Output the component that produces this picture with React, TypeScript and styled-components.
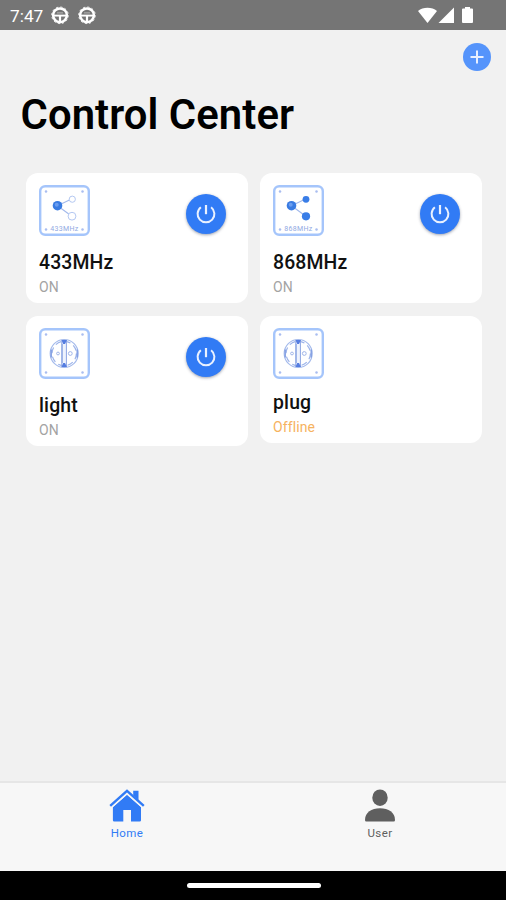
import React from "react";
import styled, { createGlobalStyle } from "styled-components";

const GlobalStyle = createGlobalStyle`
  * { box-sizing: border-box; }
  body { margin: 0; background: #f1f1f1; font-family: Roboto, "Liberation Sans", sans-serif; }
  svg { display: block; flex: none; }
  button { border: 0; padding: 0; font: inherit; }
`;

const Screen = styled.div`
  width: 506px;
  height: 900px;
  display: flex;
  flex-direction: column;
  overflow: hidden;
  background: #f1f1f1;
`;

const StatusBar = styled.header`
  height: 30px;
  flex: none;
  display: flex;
  justify-content: space-between;
  align-items: center;
  padding: 1px 33px 0 10px;
  background: #757575;
  color: #fff;
`;

const StatusGroup = styled.div<{ $gap: number }>`
  display: flex;
  align-items: center;
  gap: ${(p) => p.$gap}px;
`;

const Clock = styled.span`
  width: 33px;
  margin-right: -1px;
  font-size: 17.3px;
  line-height: 20px;
  white-space: nowrap;
`;

const BatterySlot = styled.div`
  padding-left: 6px;
`;

const Main = styled.main`
  flex: 1;
  display: flex;
  flex-direction: column;
`;

const Toolbar = styled.div`
  display: flex;
  justify-content: flex-end;
  padding: 13px 15px 0 0;
`;

const AddButton = styled.button`
  width: 28px;
  height: 28px;
  display: grid;
  place-items: center;
  border-radius: 50%;
  background: #5594fb;
`;

const Title = styled.h1`
  margin: 19px 0 0 20.5px;
  font-size: 41.8px;
  line-height: 50px;
  font-weight: 600;
  letter-spacing: 0.08px;
  color: #000;
  white-space: nowrap;
`;

const Grid = styled.section`
  display: grid;
  grid-template-columns: 222px 222px;
  align-items: start;
  gap: 13px 12px;
  padding: 33px 0 0 26px;
`;

const Card = styled.article<{ $height: number }>`
  height: ${(p) => p.$height}px;
  padding: 12px 22px 0 13px;
  border-radius: 12px;
  background: #fff;
`;

const CardTop = styled.div`
  height: 51px;
  display: flex;
  justify-content: space-between;
`;

const PowerButton = styled.button`
  width: 40px;
  height: 40px;
  margin-top: 9px;
  display: grid;
  place-items: center;
  border-radius: 50%;
  background: #317bf5;
  box-shadow: 0 1px 3px rgba(40, 50, 80, 0.45);
`;

const DeviceName = styled.h2<{ $tight: boolean }>`
  margin: ${(p) => (p.$tight ? 12 : 15)}px 0 0;
  font-size: 19.4px;
  line-height: 24px;
  font-weight: 500;
  letter-spacing: 0.15px;
  color: #111;
`;

const DeviceState = styled.p<{ $offline: boolean }>`
  margin: 3px 0 0;
  font-size: 14px;
  line-height: 18px;
  letter-spacing: 0.1px;
  color: ${(p) => (p.$offline ? "#f6b260" : "#a3a3a3")};
`;

const TabBar = styled.nav`
  height: 90px;
  flex: none;
  display: grid;
  grid-template-columns: 1fr 1fr;
  border-top: 2px solid #e6e6e6;
  background: #f7f7f7;
`;

const Tab = styled.div<{ $active?: boolean }>`
  display: flex;
  flex-direction: column;
  align-items: center;
  padding: 6px 0 0 1px;
  color: ${(p) => (p.$active ? "#317bf5" : "#5f5f5f")};
`;

const TabLabel = styled.span`
  margin-top: 4px;
  font-size: 11.5px;
  line-height: 14px;
  letter-spacing: 0.4px;
`;

const GestureBar = styled.footer`
  height: 29px;
  flex: none;
  display: flex;
  justify-content: center;
  padding: 12px 0 0 1px;
  background: #000;
`;

const Handle = styled.div`
  width: 134px;
  height: 5px;
  border-radius: 3px;
  background: #fff;
`;

const WheelIcon = () => (
  <svg width="18" height="19" viewBox="0 0 18 19" fill="none" stroke="#fff">
    <circle cx="9" cy="9.3" r="6.9" strokeWidth="2.5" />
    <circle cx="9" cy="9.3" r="8.3" strokeWidth="0.9" strokeDasharray="2.2 2.15" />
    <path d="M2.5 9.6h13" strokeWidth="1.9" />
    <path d="M9 10v6" strokeWidth="2.2" />
    <path d="M6 6.9h6" strokeWidth="0.8" strokeOpacity="0.6" />
  </svg>
);

const WifiIcon = () => (
  <svg width="19" height="17" viewBox="0 0 19 17" fill="#fff">
    <path d="M0 4C5-.2 14-.2 19 4L9.5 16Z" />
  </svg>
);

const SignalIcon = () => (
  <svg width="17" height="17" viewBox="0 0 17 17" fill="#fff">
    <path d="M16 .5V16H.5Z" />
  </svg>
);

const BatteryIcon = () => (
  <svg width="11" height="17" viewBox="0 0 11 17" fill="#fff">
    <path d="M3 0h5v1.6h2q1 0 1 1V15q0 1-1 1H1q-1 0-1-1V2.6q0-1 1-1h2Z" />
  </svg>
);

const PlusIcon = () => (
  <svg width="14" height="14" viewBox="0 0 14 14" stroke="#e8f0ff" strokeWidth="2">
    <path d="M7 .5v13M.5 7h13" />
  </svg>
);

const PowerIcon = () => (
  <svg width="20" height="20" viewBox="0 0 20 20" fill="none" stroke="#e9f1ff" strokeWidth="2">
    <path d="M4.9 3.3A8.4 8.4 0 1 0 15.1 3.3" />
    <path d="M10 1v9.2" strokeWidth="2.2" />
  </svg>
);

const PlateFrame = ({ children }: { children: React.ReactNode }) => (
  <svg width="51" height="51" viewBox="0 0 51 51" fill="none">
    <rect x="1.2" y="1.2" width="48.6" height="48.6" rx="5" stroke="#a5c5fb" strokeWidth="2.4" />
    <g fill="#a9bdf0">
      <circle cx="7" cy="6.5" r="1.25" />
      <circle cx="43.5" cy="6.5" r="1.25" />
      <circle cx="7" cy="44.5" r="1.25" />
      <circle cx="43.5" cy="44.5" r="1.25" />
    </g>
    {children}
  </svg>
);

const RadioIcon = ({ label, filled }: { label: string; filled: boolean }) => (
  <PlateFrame>
    <path d="M18.5 20.7 32.5 14M18.5 20.7 32.5 31" stroke="#a2b9eb" strokeWidth="1.1" />
    <circle cx="18.5" cy="20.7" r="4.8" fill="#397be2" />
    <circle cx="17.7" cy="19.8" r="2" fill="#6a9df0" />
    {filled ? (
      <g fill="#397de7">
        <circle cx="33" cy="14.3" r="3.4" />
        <circle cx="33" cy="31.3" r="4.1" />
      </g>
    ) : (
      <g fill="#fff" stroke="#b4c8f2" strokeWidth="1">
        <circle cx="33.3" cy="14.2" r="3.1" />
        <circle cx="33" cy="31.2" r="3.9" />
      </g>
    )}
    <text x="25.3" y="46" fill="#91a9e3" fontSize="7" textAnchor="middle" textLength="28" fontFamily="Roboto">
      {label}
    </text>
  </PlateFrame>
);

const SocketIcon = () => (
  <PlateFrame>
    <circle cx="25.2" cy="25.5" r="14" stroke="#a5bbec" strokeWidth="1.2" />
    <circle cx="25.2" cy="25.5" r="12.2" stroke="#9db4ea" strokeWidth="1.2" strokeDasharray="6 3.6" />
    <path d="M12.2 21.5v8M38.2 21.5v8" stroke="#7f9ce2" strokeWidth="1.4" />
    <rect x="22.8" y="12.7" width="4.6" height="25.6" fill="#eef3fd" stroke="#8ca5e3" />
    <path d="M22.5 12h5.5l-2 4h-1.8ZM22.5 39h5.5l-2-4h-1.8Z" fill="#557de0" />
    <path d="M23.2 16v19" stroke="#8ca5e3" />
    <circle cx="19" cy="25.5" r="1.4" stroke="#a1b6e9" />
    <circle cx="31.3" cy="25.5" r="1.9" stroke="#a1b6e9" />
  </PlateFrame>
);

const HomeIcon = () => (
  <svg width="36" height="33" viewBox="0 0 36 33" fill="currentColor">
    <path d="M18 5.8 32 18v13.2q0 1.3-1.3 1.3H22V21h-7.7v11.5H5.2q-1.3 0-1.3-1.3V18Z" />
    <path d="M24.2 1.8h5.3v9.1l-5.3-4.7Z" />
    <path d="M2.5 18.5 18 4.7 33.5 18.5" fill="none" stroke="#f7f7f7" strokeWidth="1.4" />
    <path d="M1.2 16.8 18 1.9 34.8 16.8" fill="none" stroke="currentColor" strokeWidth="2.4" />
  </svg>
);

const UserIcon = () => (
  <svg width="32" height="33" viewBox="0 0 32 33" fill="currentColor">
    <ellipse cx="16" cy="8.7" rx="7.7" ry="8.3" />
    <path d="M1 31C1 23.5 7.5 19.3 16 19.3S31 23.5 31 31q0 1.5-1.3 1.5H2.3Q1 32.5 1 31Z" />
  </svg>
);

interface Device {
  name: string;
  online: boolean;
  icon: React.ReactNode;
}

const devices: Device[] = [
  { name: "433MHz", online: true, icon: <RadioIcon label="433MHz" filled={false} /> },
  { name: "868MHz", online: true, icon: <RadioIcon label="868MHz" filled /> },
  { name: "light", online: true, icon: <SocketIcon /> },
  { name: "plug", online: false, icon: <SocketIcon /> },
];

export default function App() {
  return (
    <Screen>
      <GlobalStyle />
      <StatusBar>
        <StatusGroup $gap={9}>
          <Clock>7:47</Clock>
          <WheelIcon />
          <WheelIcon />
        </StatusGroup>
        <StatusGroup $gap={1}>
          <WifiIcon />
          <SignalIcon />
          <BatterySlot>
            <BatteryIcon />
          </BatterySlot>
        </StatusGroup>
      </StatusBar>
      <Main>
        <Toolbar>
          <AddButton aria-label="Add device">
            <PlusIcon />
          </AddButton>
        </Toolbar>
        <Title>Control Center</Title>
        <Grid>
          {devices.map((d) => (
            <Card key={d.name} $height={d.online ? 130 : 127}>
              <CardTop>
                {d.icon}
                {d.online && (
                  <PowerButton aria-label={`Toggle ${d.name}`}>
                    <PowerIcon />
                  </PowerButton>
                )}
              </CardTop>
              <DeviceName $tight={!d.online}>{d.name}</DeviceName>
              <DeviceState $offline={!d.online}>{d.online ? "ON" : "Offline"}</DeviceState>
            </Card>
          ))}
        </Grid>
      </Main>
      <TabBar>
        <Tab $active>
          <HomeIcon />
          <TabLabel>Home</TabLabel>
        </Tab>
        <Tab>
          <UserIcon />
          <TabLabel>User</TabLabel>
        </Tab>
      </TabBar>
      <GestureBar>
        <Handle />
      </GestureBar>
    </Screen>
  );
}
